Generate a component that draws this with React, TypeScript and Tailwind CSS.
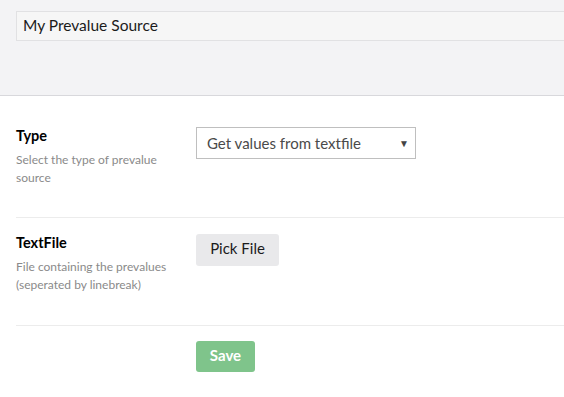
import React from "react";

export default function App() {
  return (
    <div className="w-[564px] h-[397px] overflow-hidden bg-white text-black" style={{ fontFamily: "Lato, 'Open Sans', sans-serif" }}>
      <div className="h-[96px] bg-[#f3f3f5] border-b border-[#d8d8dc] pt-[11px] pl-[16px]">
        <div className="h-[30px] w-[600px] bg-[#f6f6f6] border border-[#e1e1e3] flex items-center pl-[6px] text-[15.5px] text-[#1b1b1b]">
          My Prevalue Source
        </div>
      </div>
      <div className="pl-[16px] pt-[15px]">
        <div className="flex border-b border-[#ececec] pt-[15px] pb-[30px]">
          <div className="w-[180px] shrink-0">
            <div className="text-[14.5px] leading-[20px] font-bold mb-[5px]">Type</div>
            <div className="text-[12px] leading-[18px] text-[#8a8a8a] pr-[20px]">Select the type of prevalue source</div>
          </div>
          <div className="pt-[1px]">
            <div className="w-[220px] h-[32px] border border-[#bfbfbf] bg-white flex items-center justify-between pl-[10px] pr-[6px] text-[15px] text-[#4a4a4a]">
              <span>Get values from textfile</span>
              <span className="text-[10px] text-[#444]">▼</span>
            </div>
          </div>
        </div>
        <div className="flex border-b border-[#ececec] pt-[15px] pb-[31px]">
          <div className="w-[180px] shrink-0">
            <div className="text-[14.5px] leading-[20px] font-bold mb-[5px]">TextFile</div>
            <div className="text-[12px] leading-[18px] text-[#8a8a8a]">File containing the prevalues (seperated by linebreak)</div>
          </div>
          <div className="pt-[1px]">
            <div className="h-[32px] w-[83px] rounded-[3px] bg-[#e9e9eb] flex items-center justify-center pb-[3px] text-[15px] text-[#1b1b1b]">
              Pick File
            </div>
          </div>
        </div>
        <div className="pt-[15px] pl-[180px]">
          <div className="h-[31px] w-[59px] rounded-[3px] bg-[#7fc48b] flex items-center justify-center pb-[2px] text-[15px] font-bold text-white">
            Save
          </div>
        </div>
      </div>
    </div>
  );
}
